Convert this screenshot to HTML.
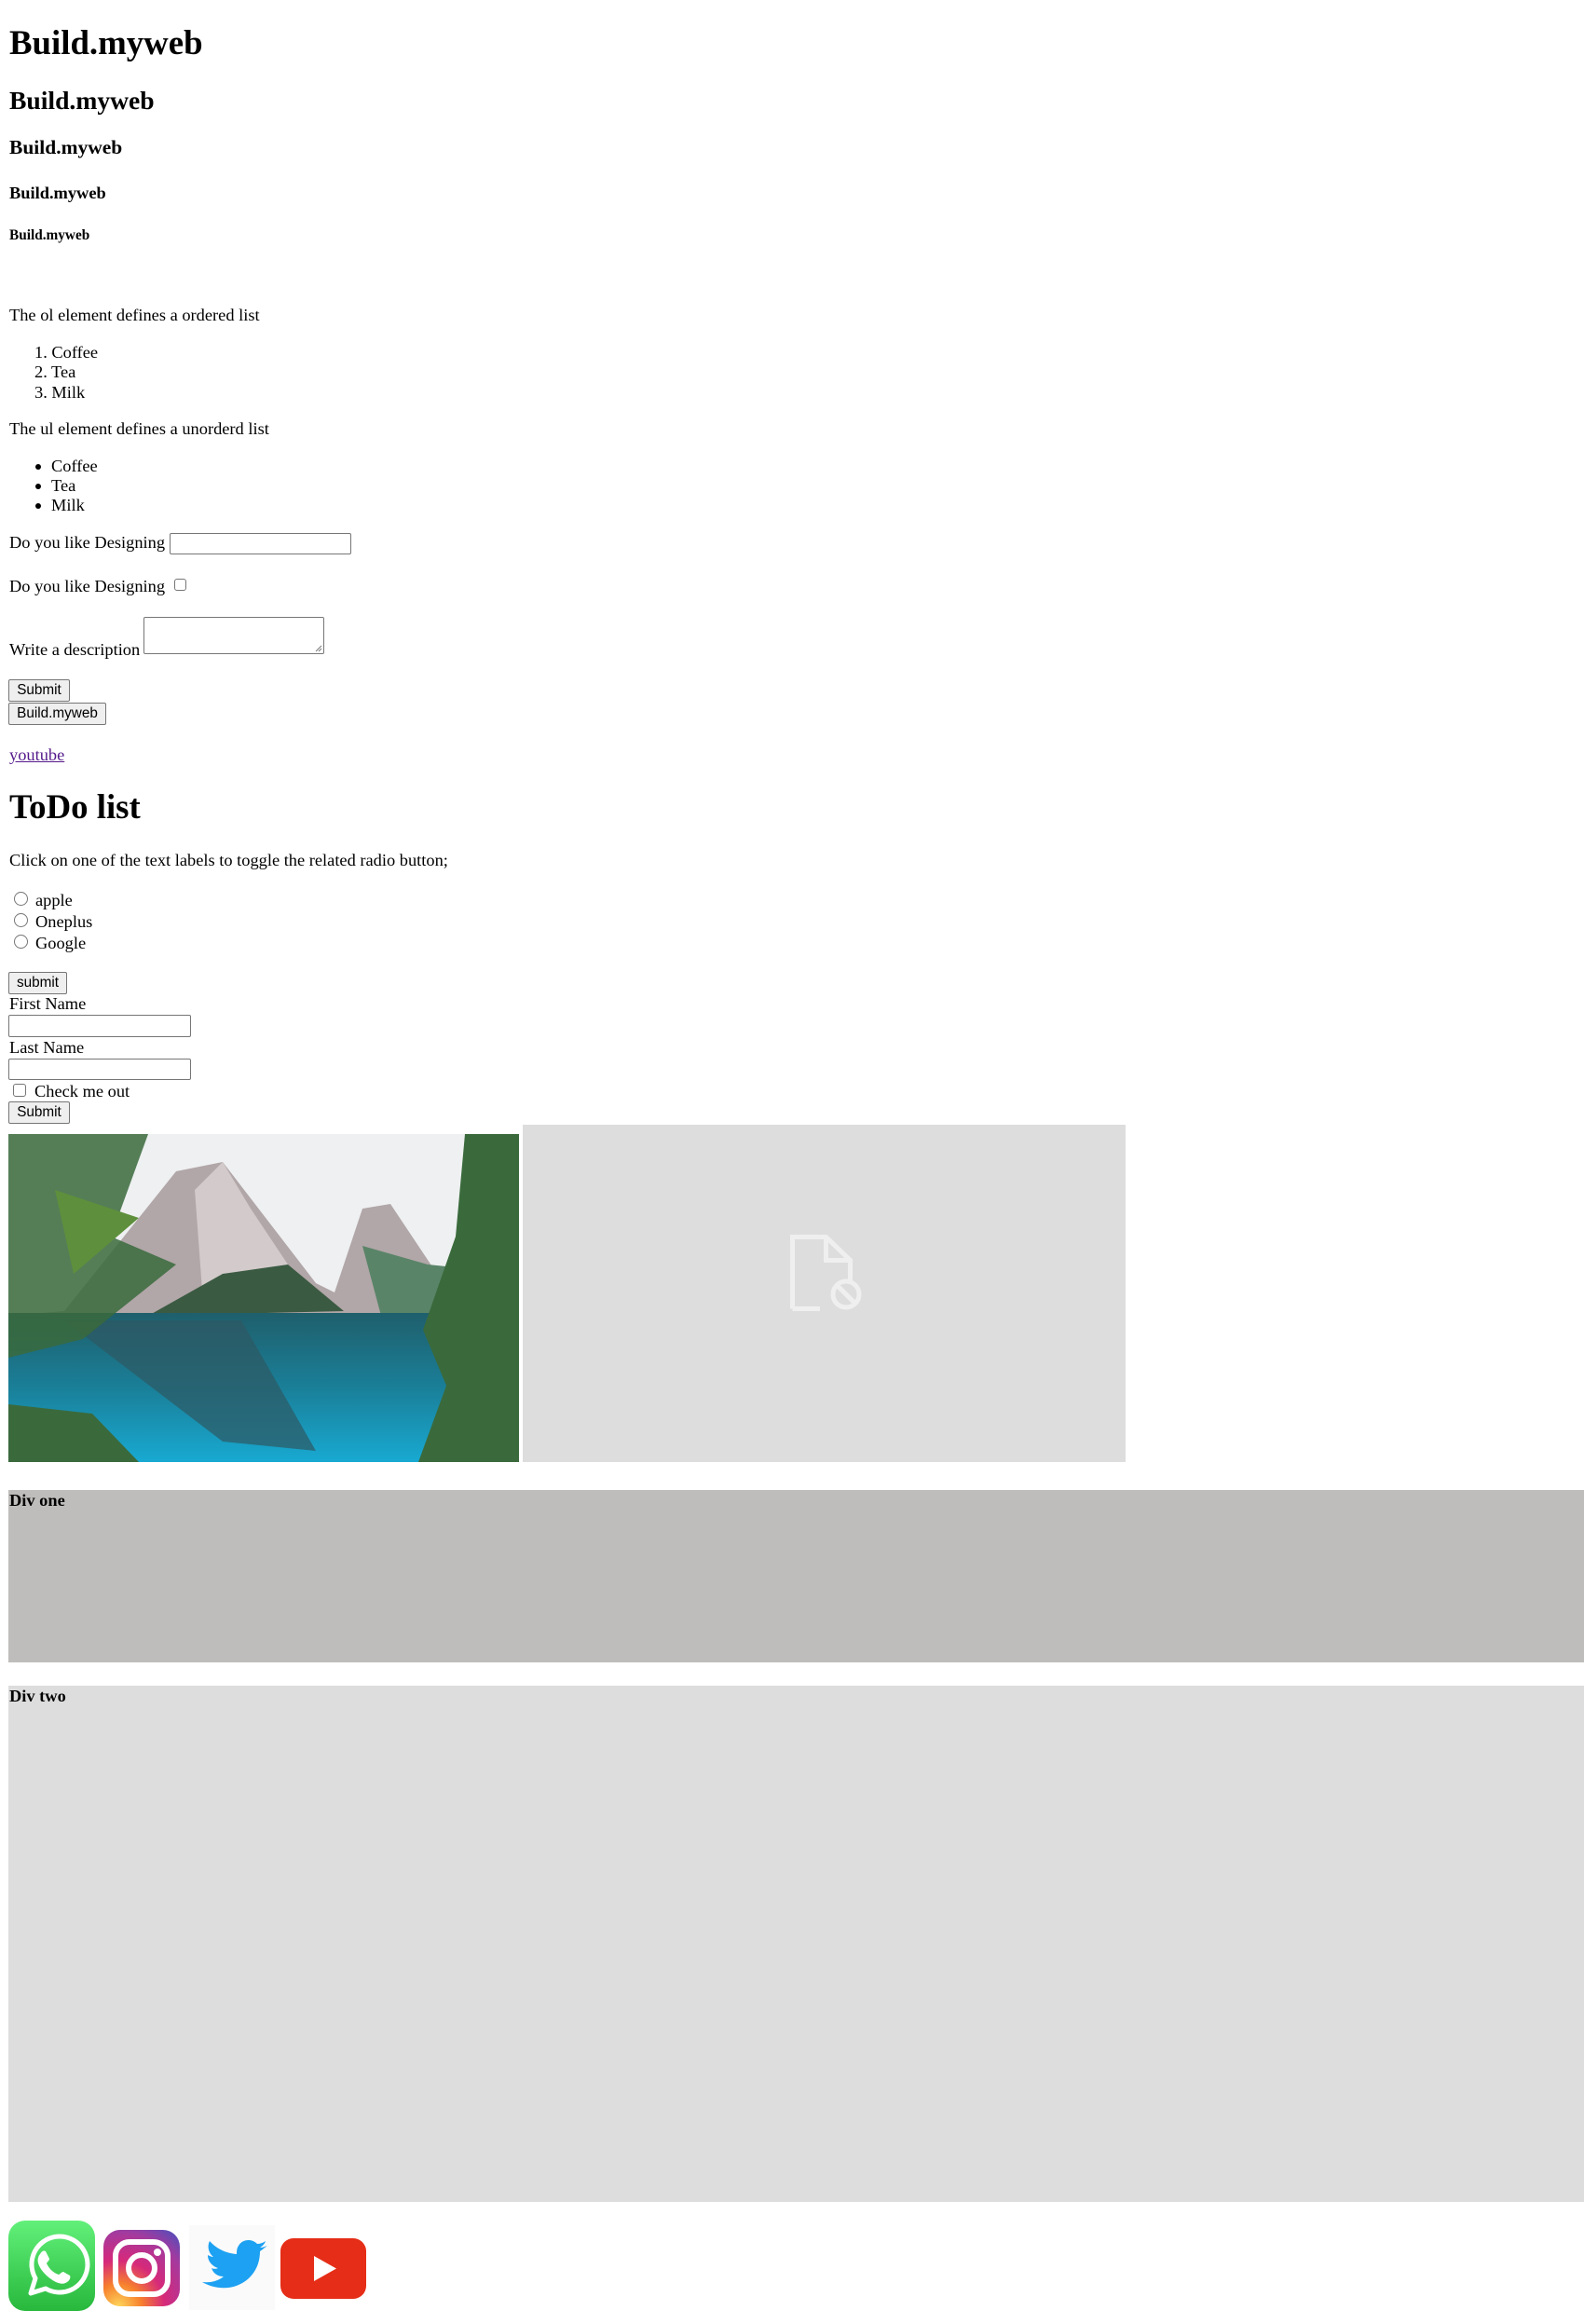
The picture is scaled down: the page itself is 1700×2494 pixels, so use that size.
<!DOCTYPE html>
<html><head><meta charset="utf-8"><style>
html,body{margin:0;padding:0;background:#fff;width:1700px;height:2494px;overflow:hidden}
body{position:relative;font-family:"Liberation Serif","Times New Roman",serif;color:#000}
.t{position:absolute;white-space:nowrap;line-height:1;font-size:18.4px}
.b{font-weight:bold}
.btn{position:absolute;box-sizing:border-box;background:#efefef;border:1px solid #767676;border-radius:2px;font-family:"Liberation Sans",Arial,sans-serif;font-size:15.3px;color:#000;display:flex;align-items:center;justify-content:center;line-height:1}
.inp{position:absolute;box-sizing:border-box;background:#fff;border:1px solid #767676;border-radius:2px}
.cb{position:absolute;box-sizing:border-box;background:#fff;border:1px solid #767676;border-radius:3px;width:14px;height:14px}
.rd{position:absolute;box-sizing:border-box;background:#fff;border:1px solid #767676;border-radius:50%;width:15px;height:15px}
.dot{position:absolute;width:6px;height:6px;border-radius:50%;background:#000;left:38px}
</style></head><body>
<div class="t b" style="left:10px;top:28px;font-size:36.8px">Build.myweb</div>
<div class="t b" style="left:10px;top:94px;font-size:27.6px">Build.myweb</div>
<div class="t b" style="left:10px;top:148px;font-size:21.5px">Build.myweb</div>
<div class="t b" style="left:10px;top:198px;font-size:18.4px">Build.myweb</div>
<div class="t b" style="left:10px;top:245px;font-size:15.3px">Build.myweb</div>

<div class="t" style="left:10px;top:329px">The ol element defines a ordered list</div>
<div class="t" style="left:37px;top:369px">1. Coffee</div>
<div class="t" style="left:37px;top:390px">2. Tea</div>
<div class="t" style="left:37px;top:412px">3. Milk</div>
<div class="t" style="left:10px;top:451px">The ul element defines a unorderd list</div>
<div class="dot" style="top:498px"></div><div class="t" style="left:55px;top:491px">Coffee</div>
<div class="dot" style="top:519px"></div><div class="t" style="left:55px;top:512px">Tea</div>
<div class="dot" style="top:540px"></div><div class="t" style="left:55px;top:533px">Milk</div>

<div class="t" style="left:10px;top:573px">Do you like Designing</div>
<div class="inp" style="left:182px;top:572px;width:195px;height:23px"></div>
<div class="t" style="left:10px;top:620px">Do you like Designing</div>
<div class="cb" style="left:187px;top:621px;width:13px;height:13px"></div>
<div class="t" style="left:10px;top:688px">Write a description</div>
<div class="inp" style="left:154px;top:662px;width:194px;height:40px"></div>
<svg style="position:absolute;left:338px;top:692px" width="8" height="8"><path d="M1 7L7 1M4 7L7 4" stroke="#777" stroke-width="1"/></svg>
<div class="btn" style="left:9px;top:729px;width:66px;height:24px">Submit</div>
<div class="btn" style="left:9px;top:754px;width:105px;height:24px">Build.myweb</div>
<div class="t" style="left:10px;top:801px;color:#551a8b;text-decoration:underline">youtube</div>

<div class="t b" style="left:10px;top:848px;font-size:36.8px">ToDo list</div>
<div class="t" style="left:10px;top:914px">Click on one of the text labels to toggle the related radio button;</div>
<div class="rd" style="left:15px;top:957px"></div>
<div class="t" style="left:38px;top:957px">apple</div>
<div class="rd" style="left:15px;top:980px"></div>
<div class="t" style="left:38px;top:980px">Oneplus</div>
<div class="rd" style="left:15px;top:1003px"></div>
<div class="t" style="left:38px;top:1003px">Google</div>
<div class="btn" style="left:9px;top:1043px;width:63px;height:24px">submit</div>
<div class="t" style="left:10px;top:1068px">First Name</div>
<div class="inp" style="left:9px;top:1089px;width:196px;height:24px"></div>
<div class="t" style="left:10px;top:1115px">Last Name</div>
<div class="inp" style="left:9px;top:1136px;width:196px;height:23px"></div>
<div class="cb" style="left:14px;top:1163px"></div>
<div class="t" style="left:37px;top:1162px">Check me out</div>
<div class="btn" style="left:9px;top:1182px;width:66px;height:24px">Submit</div>

<svg style="position:absolute;left:9px;top:1217px" width="548" height="352" viewBox="0 0 548 352" preserveAspectRatio="none">
<defs>
<linearGradient id="lk" x1="0" y1="0" x2="0" y2="1"><stop offset="0" stop-color="#1f5f6c"/><stop offset="0.5" stop-color="#1a7f98"/><stop offset="1" stop-color="#18a9d2"/></linearGradient>
</defs>
<rect width="548" height="352" fill="#eef0f1"/>
<polygon points="60,190 180,40 230,30 330,160 350,170 380,80 410,75 460,150 548,170 548,195 0,195" fill="#b1a6a8"/>
<polygon points="200,60 230,30 260,80 300,140 260,190 210,195" fill="#d2cacb"/>
<polygon points="150,195 230,150 300,140 360,190" fill="#3b5a42"/>
<polygon points="380,120 450,140 548,150 548,195 400,195" fill="#5a8468"/>
<rect y="192" width="548" height="160" fill="url(#lk)"/>
<polygon points="60,200 250,200 330,340 230,330" fill="#2d5962" opacity="0.7"/>
<polygon points="0,0 150,0 110,110 180,140 80,220 0,240" fill="#3a6a3c" opacity="0.85"/>
<polygon points="0,290 90,300 140,352 0,352" fill="#3a6a3c"/>
<polygon points="490,0 548,0 548,352 440,352 470,270 445,210 480,110" fill="#3a6a3c"/>
<polygon points="50,60 140,90 70,150" fill="#5e8f3c"/>
</svg>

<div style="position:absolute;left:561px;top:1207px;width:647px;height:362px;background:#dddddd"></div>
<svg style="position:absolute;left:840px;top:1318px" width="90" height="100">
<path d="M10.5 86.5V9.5H46.5L72.5 34.5V56" fill="none" stroke="#efefef" stroke-width="5"/>
<path d="M46.5 9.5V34.5H72.5" fill="none" stroke="#efefef" stroke-width="5"/>
<path d="M10.5 86.5H40" fill="none" stroke="#efefef" stroke-width="5"/>
<circle cx="68" cy="71" r="14" fill="none" stroke="#efefef" stroke-width="5"/>
<path d="M58 61L78 81" stroke="#efefef" stroke-width="5"/>
</svg>

<div style="position:absolute;left:9px;top:1599px;width:1691px;height:185px;background:#bebdbb"></div>
<div class="t b" style="left:10px;top:1601px">Div one</div>
<div style="position:absolute;left:9px;top:1809px;width:1691px;height:554px;background:#dddddd"></div>
<div class="t b" style="left:10px;top:1811px">Div two</div>

<svg style="position:absolute;left:9px;top:2383px" width="93" height="97" viewBox="0 0 93 97">
<defs><linearGradient id="wa" x1="0" y1="0" x2="0" y2="1"><stop offset="0" stop-color="#62f07a"/><stop offset="1" stop-color="#27b83c"/></linearGradient></defs>
<rect width="93" height="97" rx="18" fill="url(#wa)"/>
<path d="M24 78L29 62A30 30 0 1 1 40 73Z" fill="none" stroke="#fff" stroke-width="5" stroke-linejoin="round"/>
<path d="M34 36c2-4 5-4 6-3l4 8c0 2-3 4-3 5 3 6 7 10 13 12 1 0 3-3 5-3l7 4c1 2 0 5-3 7-4 3-10 2-17-3-7-5-12-11-14-17-1-4 0-8 2-10z" fill="#fff"/>
</svg>
<svg style="position:absolute;left:111px;top:2393px" width="82" height="82" viewBox="0 0 82 82">
<defs><radialGradient id="ig" cx="0.2" cy="1" r="1.2"><stop offset="0" stop-color="#fdd55a"/><stop offset="0.25" stop-color="#f77f2e"/><stop offset="0.5" stop-color="#d6297a"/><stop offset="0.8" stop-color="#a43a9e"/><stop offset="1" stop-color="#5b4bb7"/></radialGradient></defs>
<rect width="82" height="82" rx="18" fill="url(#ig)"/>
<rect x="13" y="13" width="56" height="56" rx="15" fill="none" stroke="#fff" stroke-width="6"/>
<circle cx="41" cy="41" r="14" fill="none" stroke="#fff" stroke-width="6"/>
<circle cx="58" cy="24" r="4" fill="#fff"/>
</svg>
<svg style="position:absolute;left:203px;top:2388px" width="92" height="91" viewBox="0 0 92 91">
<rect width="92" height="91" fill="#fafafa"/>
<path d="M84 22c-3 1-5 2-8 2 3-2 5-4 6-7-3 2-6 3-9 3-6-6-16-5-20 2-2 3-2 6-2 9-12-1-22-6-29-14-3 6-1 13 4 17-2 0-4-1-6-2 0 7 5 12 11 14-2 1-5 1-7 0 2 6 7 9 13 9-6 5-14 7-23 6 28 16 62 0 62-33 3-2 5-4 8-6z" fill="#1da1f2"/>
</svg>
<svg style="position:absolute;left:301px;top:2402px" width="92" height="65" viewBox="0 0 92 65">
<rect width="92" height="65" rx="14" fill="#e52d17"/>
<path d="M36 19L60 32.5L36 46Z" fill="#fff"/>
</svg>
</body></html>
